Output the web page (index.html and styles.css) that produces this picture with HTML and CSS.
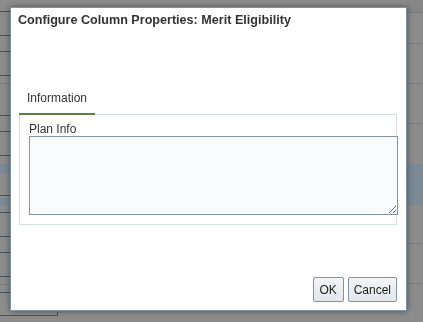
FILE: index.html
```html
<!DOCTYPE html>
<html lang="en">
<head>
    <meta charset="UTF-8">
    <title>Configure Column Properties</title>
    <link rel="stylesheet" href="styles.css">
</head>
<body>
    <div class="backdrop">
        <div class="side side-left" id="leftRows"></div>
        <div class="side-gap"></div>
        <div class="side side-right" id="rightRows"></div>
    </div>

    <div class="dialog" role="dialog">
        <h1 class="dialog-title">Configure Column Properties: Merit Eligibility</h1>

        <div class="tabs">
            <a href="#" class="tab active">Information</a>
        </div>
        <div class="tab-panel">
            <label class="field-label" for="planInfo">Plan Info</label>
            <textarea id="planInfo" class="field-text"></textarea>
        </div>

        <div class="dialog-footer">
            <button class="btn">OK</button>
            <button class="btn">Cancel</button>
        </div>
    </div>

    <script>
        // rows of the table that sits behind the modal: [height, kind]
        const leftRows = [
            [12, 'dark'], [24, 'dark'], [16, 'dark'], [24, 'dark'], [8, 'light'],
            [32, 'dark'], [16, 'dark'], [24, 'dark'], [8, 'none'], [9, 'band'],
            [23, 'dark'], [2, 'none'], [7, 'band'], [8, 'dark'], [24, 'dark'],
            [16, 'dark'], [24, 'dark'], [8, 'light'], [8, 'dark'], [19, 'none'],
            [4, 'tail']
        ];
        const rightRows = [
            [13, 'top'], [31, 'light'], [40, 'light'], [40, 'light'], [40, 'none'],
            [41, 'band'], [39, 'light'], [40, 'light'], [38, 'none']
        ];

        function fill(el, rows) {
            rows.forEach(([h, kind]) => {
                const row = document.createElement('div');
                row.className = 'bg-row ' + kind;
                row.style.height = h + 'px';
                el.appendChild(row);
            });
        }

        fill(document.getElementById('leftRows'), leftRows);
        fill(document.getElementById('rightRows'), rightRows);
    </script>
</body>
</html>
```

FILE: styles.css
```css
:root {
    --backdrop: #8c8c8c;
    --text: #333333;
    --line-dark: #46535c;
    --line-light: #7a7a7a;
    --band: #7b8994;
    --accent: #5f7f4a;
    --border: #7f93a3;
    --panel-border: #d5dde3;
}

* {
    margin: 0;
    padding: 0;
    box-sizing: border-box;
}

body {
    font-family: 'Liberation Sans', Arial, sans-serif;
    color: var(--text);
    background-color: var(--backdrop);
    width: 423px;
    height: 322px;
    overflow: hidden;
}

/* page behind the modal */
.backdrop {
    display: flex;
    height: 322px;
}

.side-left {
    width: 10px;
}

.side-gap {
    flex-grow: 1;
}

.side-right {
    width: 16px;
}

.bg-row.dark {
    border-bottom: 1px solid var(--line-dark);
}

.bg-row.light {
    border-bottom: 1px solid var(--line-light);
}

.bg-row.band {
    background-color: var(--band);
}

.bg-row.top {
    background-color: #868686;
    border-bottom: 1px solid #787878;
}

.bg-row.tail {
    width: 58px;
    border-right: 1px solid var(--line-dark);
    border-bottom: 1px solid var(--line-dark);
}

/* modal */
.dialog {
    position: fixed;
    left: 10px;
    top: 7px;
    width: 397px;
    height: 304px;
    background: #ffffff;
    border: 1px solid var(--border);
    box-shadow: 0 0 6px rgba(0, 0, 0, 0.45);
    display: flex;
    flex-direction: column;
}

.dialog-title {
    font-size: 12.6px;
    font-weight: bold;
    line-height: 16px;
    color: #333;
    padding: 4px 0 0 7px;
}

.tabs {
    display: flex;
    margin: 58px 0 0 8px;
}

.tab {
    display: block;
    font-size: 12px;
    line-height: 14px;
    color: #333;
    text-decoration: none;
    padding: 5px 9px 8px 8px;
    width: 76px;
    border-bottom: 2px solid var(--accent);
    margin-bottom: -1px;
    position: relative;
}

.tab-panel {
    margin: 0 9px 0 8px;
    border: 1px solid var(--panel-border);
    padding: 8px 0 9px 9px;
    display: flex;
    flex-direction: column;
}

.field-label {
    font-size: 12px;
    line-height: 13px;
    color: #333;
}

.field-text {
    display: block;
    width: 369px;
    height: 79px;
    border: 1px solid var(--border);
    background-color: #f9fbfd;
    resize: vertical;
    font-family: inherit;
    font-size: 12px;
}

.dialog-footer {
    margin-top: auto;
    display: flex;
    justify-content: flex-end;
    gap: 4px;
    padding: 0 9px 8px 0;
}

.btn {
    height: 25px;
    padding: 0 5px;
    min-width: 31px;
    font-family: inherit;
    font-size: 12px;
    color: #222;
    background: linear-gradient(#f3f5f7, #e3e7eb);
    border: 1px solid var(--border);
    border-radius: 2px;
    cursor: pointer;
}
```
